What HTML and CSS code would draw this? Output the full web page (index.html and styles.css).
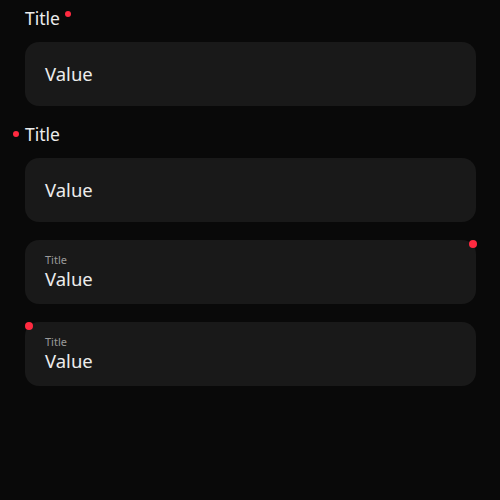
FILE: index.html
```html
<!DOCTYPE html>
<html lang="en">
<head>
    <meta charset="UTF-8">
    <meta name="viewport" content="width=device-width, initial-scale=1.0">
    <title>Fields</title>
    <link rel="stylesheet" href="styles.css">
</head>
<body>
<div class="container">
    <div class="field">
        <div class="label">Title<span class="dot dot-after"></span></div>
        <div class="box"><span class="value">Value</span></div>
    </div>

    <div class="field">
        <div class="label"><span class="dot dot-before"></span>Title</div>
        <div class="box"><span class="value">Value</span></div>
    </div>

    <div class="field field-inner">
        <div class="box box-inner">
            <span class="small-title">Title</span>
            <span class="value">Value</span>
            <span class="badge badge-right"></span>
        </div>
    </div>

    <div class="field field-inner">
        <div class="box box-inner">
            <span class="small-title">Title</span>
            <span class="value">Value</span>
            <span class="badge badge-left"></span>
        </div>
    </div>
</div>
</body>
</html>
```

FILE: styles.css
```css
html, body {
    margin: 0;
    padding: 0;
    height: 100%;
}
body {
    font-family: "Noto Sans", "DejaVu Sans", sans-serif;
    background-color: #090909;
    color: #ececec;
}
.container {
    padding: 6px 24px 0 25px;
}
.field {
    margin-bottom: 16px;
}
.field-inner {
    margin-top: 18px;
    margin-bottom: 0;
}
.label {
    display: flex;
    align-items: center;
    font-size: 17.5px;
    line-height: 24px;
    height: 24px;
    margin-bottom: 12px;
}
.dot {
    width: 6px;
    height: 6px;
    border-radius: 50%;
    background: #ff2a40;
    flex: none;
}
.dot-after {
    margin-left: 5px;
    align-self: flex-start;
    margin-top: 5px;
}
.dot-before {
    margin-left: -12px;
    margin-right: 6px;
}
.box {
    position: relative;
    height: 64px;
    box-sizing: border-box;
    padding: 0 20px;
    border-radius: 14px;
    background-color: #191919;
    display: flex;
    align-items: center;
}
.box-inner {
    flex-direction: column;
    align-items: flex-start;
    justify-content: flex-start;
    padding-top: 13px;
}
.value {
    font-size: 18.5px;
    line-height: 24px;
}
.small-title {
    font-size: 11px;
    line-height: 14px;
    color: #9a9a9a;
}
.badge {
    position: absolute;
    width: 8px;
    height: 8px;
    border-radius: 50%;
    background: #ff2a40;
}
.badge-right {
    right: -1px;
    top: 0;
}
.badge-left {
    left: 0;
    top: 0;
}
```
